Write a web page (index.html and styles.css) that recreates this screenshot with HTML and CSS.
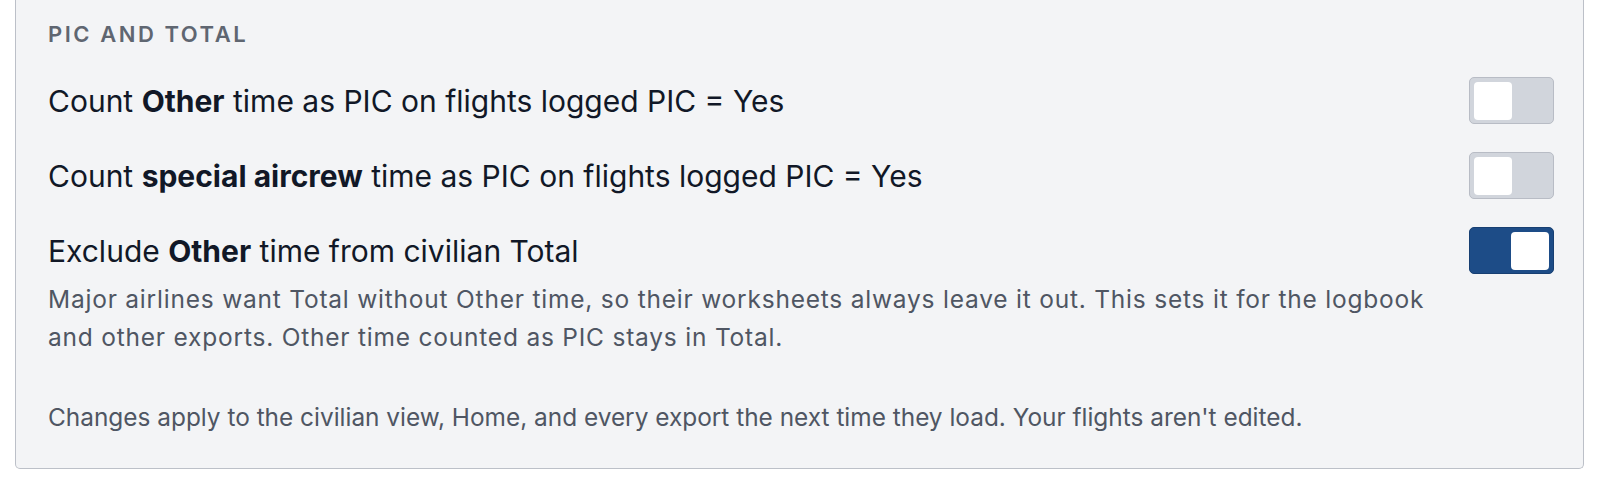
FILE: index.html
```html
<!DOCTYPE html>
<html>
<head>
    <meta charset="utf-8">
    <title>Settings - PIC and Total</title>
    <link rel="stylesheet" href="styles.css">
</head>
<body>
<main>
<section class="panel">
    <h3 class="panel-title">PIC and Total</h3>

    <div class="setting">
        <div class="setting-row">
            <span class="setting-label">Count <b>Other</b> time as PIC on flights logged PIC = Yes</span>
            <button class="toggle" aria-pressed="false"><span class="knob"></span></button>
        </div>
    </div>

    <div class="setting">
        <div class="setting-row">
            <span class="setting-label">Count <b>special aircrew</b> time as PIC on flights logged PIC = Yes</span>
            <button class="toggle" aria-pressed="false"><span class="knob"></span></button>
        </div>
    </div>

    <div class="setting">
        <div class="setting-row">
            <span class="setting-label">Exclude <b>Other</b> time from civilian Total</span>
            <button class="toggle on" aria-pressed="true"><span class="knob"></span></button>
        </div>
        <p class="setting-help">Major airlines want Total without Other time, so their worksheets always leave it out. This sets it for the logbook and other exports. Other time counted as PIC stays in Total.</p>
    </div>

    <p class="panel-note">Changes apply to the civilian view, Home, and every export the next time they load. Your flights aren't edited.</p>
</section>
</main>
</body>
</html>
```

FILE: styles.css
```css
body{
    margin: 0;
    background: #fff;
    font-family: Inter, "Noto Sans", sans-serif;
    color: #111827;
}
main{
    padding: 0 16px 16px 15px;
}
.panel{
    background: #f3f4f6;
    border: 1px solid #bcc0c8;
    border-top: none;
    border-radius: 0 0 5px 5px;
    padding: 20px 29px 31px 32px;
    display: flex;
    flex-direction: column;
}
.panel-title{
    margin: 0;
    font-size: 22px;
    line-height: 29px;
    font-weight: 600;
    letter-spacing: 0.115em;
    text-transform: uppercase;
    color: #5f6671;
}
.setting{
    margin-top: 28px;
}
.setting-row{
    display: flex;
    align-items: center;
    justify-content: space-between;
    height: 47px;
}
.setting-label{
    margin-top: 2px;
    font-size: 30px;
    line-height: 47px;
}
.setting-label b{
    font-weight: 700;
}
.setting-help{
    margin: 7px 0 0;
    font-size: 24.5px;
    line-height: 37.5px;
    letter-spacing: 0.032em;
    color: #4f5663;
    max-width: 1400px;
}
.panel-note{
    margin: 43px 0 0;
    font-size: 24.4px;
    line-height: 37.5px;
    color: #4f5663;
}
.toggle{
    width: 85px;
    height: 47px;
    padding: 4px;
    border: 1px solid #b8bcc5;
    border-radius: 5px;
    background: #d1d5dc;
    display: flex;
    align-items: center;
    justify-content: flex-start;
    cursor: pointer;
}
.toggle .knob{
    width: 38px;
    height: 38px;
    border-radius: 4px;
    background: #fff;
}
.toggle.on{
    background: #1d4c87;
    border-color: #173f72;
    justify-content: flex-end;
}
```
